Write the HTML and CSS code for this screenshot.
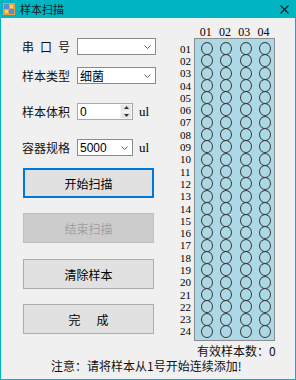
FILE: index.html
```html
<!DOCTYPE html>
<html lang="zh-CN">
<head>
  <meta charset="UTF-8">
  <title>样本扫描</title>
  <link rel="stylesheet" href="styles.css">
</head>
<body>
  <div class="window">
    <div class="titlebar">
      <svg class="app-icon" width="12" height="12" viewBox="0 0 12 12">
        <rect x="0" y="0" width="12" height="12" fill="#e8a048"/>
        <rect x="1" y="1" width="5" height="5" fill="#5a8ec8"/>
        <rect x="6" y="6" width="5" height="5" fill="#5a8ec8"/>
        <rect x="7" y="2" width="3" height="3" fill="#f6d27a"/>
        <rect x="2" y="7" width="3" height="3" fill="#f6d27a"/>
      </svg>
      <span class="title">样本扫描</span>
      <svg class="close" width="9" height="9" viewBox="0 0 9 9">
        <path d="M0.5 0.5 L8.5 8.5 M8.5 0.5 L0.5 8.5" stroke="#1a1a1a" stroke-width="1.1"/>
      </svg>
    </div>

    <div class="content">
      <div class="left">
        <div class="form-row first">
          <span class="label spaced">串口号</span>
          <div class="combo wide"><span></span><svg class="chev" width="7" height="4" viewBox="0 0 7 4"><path d="M0.5 0.5 L3.5 3.5 L6.5 0.5" fill="none" stroke="#606060"/></svg></div>
        </div>
        <div class="form-row second">
          <span class="label">样本类型</span>
          <div class="combo wide"><span>细菌</span><svg class="chev" width="7" height="4" viewBox="0 0 7 4"><path d="M0.5 0.5 L3.5 3.5 L6.5 0.5" fill="none" stroke="#606060"/></svg></div>
        </div>
        <div class="form-row gap">
          <span class="label">样本体积</span>
          <div class="spin">
            <span class="spin-val">0</span>
            <div class="spin-btns">
              <div class="spin-btn"><svg width="5" height="3" viewBox="0 0 5 3"><path d="M0 3 L2.5 0 L5 3 Z" fill="#333"/></svg></div>
              <div class="spin-btn"><svg width="5" height="3" viewBox="0 0 5 3"><path d="M0 0 L2.5 3 L5 0 Z" fill="#333"/></svg></div>
            </div>
          </div>
          <span class="unit">ul</span>
        </div>
        <div class="form-row gap">
          <span class="label">容器规格</span>
          <div class="combo narrow"><span class="num">5000</span><svg class="chev" width="7" height="4" viewBox="0 0 7 4"><path d="M0.5 0.5 L3.5 3.5 L6.5 0.5" fill="none" stroke="#606060"/></svg></div>
          <span class="unit">ul</span>
        </div>

        <button class="btn focused">开始扫描</button>
        <button class="btn disabled">结束扫描</button>
        <button class="btn mid">清除样本</button>
        <button class="btn last">完&nbsp;&nbsp;&nbsp;&nbsp;&nbsp;&nbsp;成</button>
      </div>

      <div class="right">
        <div class="plate-head" id="plate-head"></div>
        <div class="plate-body">
          <div class="row-labels" id="row-labels"></div>
          <div class="plate" id="plate"></div>
        </div>
        <div class="count">有效样本数：0</div>
      </div>
    </div>

    <div class="note">注意：请将样本从1号开始连续添加!</div>
  </div>

  <script>
    function pad(n) {
      return n < 10 ? '0' + n : '' + n;
    }

    var head = document.getElementById('plate-head');
    var labels = document.getElementById('row-labels');
    var plate = document.getElementById('plate');

    for (var c = 1; c <= 4; c++) {
      var h = document.createElement('span');
      h.textContent = pad(c);
      head.appendChild(h);
    }

    for (var r = 1; r <= 24; r++) {
      var l = document.createElement('span');
      l.textContent = pad(r);
      labels.appendChild(l);
      for (var k = 0; k < 4; k++) {
        var w = document.createElement('div');
        w.className = 'well';
        plate.appendChild(w);
      }
    }
  </script>
</body>
</html>
```

FILE: styles.css
```css
body {
  margin: 0;
  font-family: "Noto Sans CJK SC", "Liberation Sans", sans-serif;
  font-size: 12px;
  color: #000;
}
.window {
  width: 296px;
  height: 380px;
  box-sizing: border-box;
  border: 1px solid #00b5c2;
  border-top: none;
  background: #f0f0f0;
}
.titlebar {
  height: 18px;
  margin: 0 -1px;
  background: #00b5c2;
  display: flex;
  align-items: center;
  padding-left: 3px;
}
.app-icon {
  display: block;
}
.title {
  margin-left: 5px;
  font-size: 11px;
  line-height: 18px;
  color: #1a1a1a;
}
.close {
  margin-left: auto;
  margin-right: 7px;
}
.content {
  display: flex;
}
.left {
  width: 177px;
  padding-left: 21px;
  box-sizing: border-box;
}
.form-row {
  display: flex;
  align-items: center;
  height: 17px;
}
.form-row.first {
  margin-top: 20px;
}
.form-row.second {
  margin-top: 12px;
}
.form-row.gap {
  margin-top: 19px;
}
.label {
  width: 55px;
  font-size: 12px;
  color: #111;
}
.label.spaced {
  letter-spacing: 6px;
}
.combo {
  height: 17px;
  box-sizing: border-box;
  border: 1px solid #8a8a8a;
  background: #fff;
  display: flex;
  align-items: center;
  padding-left: 2px;
  font-size: 12px;
}
.combo.wide {
  width: 79px;
}
.combo.narrow {
  width: 56px;
}
.combo .chev {
  margin-left: auto;
  margin-right: 4px;
}
.num, .spin-val {
  font-family: "Liberation Sans", sans-serif;
  font-size: 12px;
}
.spin {
  width: 56px;
  height: 17px;
  box-sizing: border-box;
  border: 1px solid #a8a8a8;
  background: #fff;
  display: flex;
  align-items: center;
  padding-left: 2px;
}
.spin-btns {
  margin-left: auto;
  width: 12px;
  height: 15px;
  display: flex;
  flex-direction: column;
}
.spin-btn {
  flex: 1;
  background: #e6e6e6;
  border: 1px solid #f4f4f4;
  display: flex;
  align-items: center;
  justify-content: center;
}
.unit {
  margin-left: 6px;
  font-family: "Liberation Serif", serif;
  font-size: 13px;
}
.btn {
  display: block;
  width: 131px;
  height: 30px;
  box-sizing: border-box;
  margin: 15px 0 0 1px;
  padding: 0;
  font-family: "Noto Sans CJK SC", sans-serif;
  font-size: 12px;
  color: #000;
  background: #e1e1e1;
  border: 1px solid #adadad;
  white-space: pre;
}
.btn.focused {
  margin-top: 12px;
  border: 2px solid #0078d7;
}
.btn.disabled {
  background: #cccccc;
  border-color: #bfbfbf;
  color: #a0a0a0;
}
.btn.mid {
  margin-top: 16px;
}
.right {
  width: 116px;
  padding-left: 1px;
}
.plate-head {
  margin-top: 8px;
  height: 12px;
  margin-left: 17px;
  display: grid;
  grid-template-columns: repeat(4, 19.3px);
  font-family: "Liberation Serif", serif;
  font-size: 12px;
  line-height: 12px;
}
.plate-head span {
  text-align: center;
}
.plate-body {
  display: flex;
}
.row-labels {
  width: 15px;
  padding-top: 5px;
  padding-left: 1px;
  box-sizing: border-box;
  display: grid;
  grid-template-rows: repeat(24, 12.3px);
  font-family: "Liberation Serif", serif;
  font-size: 11px;
  line-height: 11px;
}
.row-labels span {
  align-self: center;
}
.plate {
  width: 81px;
  height: 303px;
  box-sizing: border-box;
  border: 1px solid #8c8c8c;
  background: #add8e6;
  padding: 3px 0 0 6px;
  display: grid;
  grid-template-columns: repeat(4, 19.3px);
  grid-template-rows: repeat(24, 12.3px);
}
.well {
  width: 12px;
  height: 13px;
  box-sizing: border-box;
  border: 1px solid #3a3a3a;
  border-radius: 50%;
}
.count {
  margin: 3px 0 0 18px;
  font-size: 12px;
  line-height: 14px;
  color: #111;
}
.note {
  margin: 1px 0 0 50px;
  font-size: 12px;
  line-height: 14px;
  color: #111;
}
```
